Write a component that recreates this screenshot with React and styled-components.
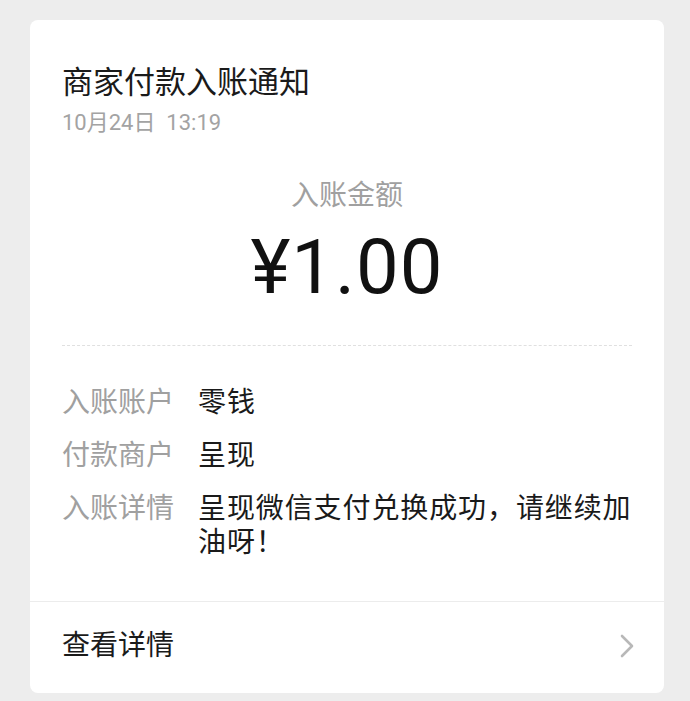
import React from 'react';
import styled, { createGlobalStyle } from 'styled-components';

const GlobalStyle = createGlobalStyle`
  html, body {
    margin: 0;
    padding: 0;
    background: #ededed;
  }
  body {
    font-family: Roboto, "Noto Sans CJK SC", sans-serif;
    -webkit-font-smoothing: antialiased;
  }
`;

const Page = styled.div`
  width: 690px;
  min-height: 701px;
  padding-top: 20px;
  box-sizing: border-box;
`;

const Card = styled.div`
  width: 634px;
  margin-left: 30px;
  background: #ffffff;
  border-radius: 8px;
  overflow: hidden;
`;

const Body = styled.div`
  padding: 43px 30px 41px 32px;
`;

const Title = styled.div`
  font-size: 31px;
  line-height: 40px;
  color: #1a1a1a;
`;

const Time = styled.div`
  margin-top: 5px;
  font-size: 22px;
  line-height: 30px;
  color: #a3a3a3;
`;

const AmountBlock = styled.div`
  display: flex;
  flex-direction: column;
  align-items: center;
  margin-top: 40px;
  margin-right: 2px;
`;

const AmountLabel = styled.div`
  font-size: 28px;
  line-height: 36px;
  color: #a0a0a0;
`;

const Amount = styled.div`
  margin-top: 15px;
  font-family: Roboto, sans-serif;
  font-size: 76px;
  line-height: 76px;
  color: #111111;
  letter-spacing: 1px;
`;

const Dashed = styled.div`
  margin-top: 40px;
  margin-right: 2px;
  border-top: 1.5px dashed #e0e0e0;
`;

const Rows = styled.div`
  margin-top: 40px;
  display: flex;
  flex-direction: column;
  gap: 19px;
`;

const Row = styled.div`
  display: flex;
  font-size: 28px;
  line-height: 34px;
`;

const Label = styled.div`
  flex: 0 0 136px;
  color: #a0a0a0;
`;

const Value = styled.div`
  flex: 1;
  letter-spacing: 0.9px;
  color: #1a1a1a;
`;

const Footer = styled.div`
  display: flex;
  align-items: center;
  justify-content: space-between;
  height: 92px;
  padding: 0 28px 4px 32px;
  box-sizing: border-box;
  border-top: 1px solid #ececec;
`;

const FooterText = styled.div`
  font-size: 28px;
  line-height: 34px;
  color: #1a1a1a;
`;

const Chevron = () => (
  <svg width="17" height="26" viewBox="0 0 17 26">
    <polyline
      points="3,3 13,13 3,23"
      fill="none"
      stroke="#b8b8b8"
      strokeWidth="2.6"
      strokeLinecap="round"
      strokeLinejoin="round"
    />
  </svg>
);

const rows = [
  { label: '入账账户', value: '零钱' },
  { label: '付款商户', value: '呈现' },
  { label: '入账详情', value: '呈现微信支付兑换成功，请继续加油呀！' },
];

export default function App() {
  return (
    <Page>
      <GlobalStyle />
      <Card>
        <Body>
          <Title>商家付款入账通知</Title>
          <Time>10月24日&nbsp;&nbsp;13:19</Time>
          <AmountBlock>
            <AmountLabel>入账金额</AmountLabel>
            <Amount>¥1.00</Amount>
          </AmountBlock>
          <Dashed />
          <Rows>
            {rows.map(r => (
              <Row key={r.label}>
                <Label>{r.label}</Label>
                <Value>{r.value}</Value>
              </Row>
            ))}
          </Rows>
        </Body>
        <Footer>
          <FooterText>查看详情</FooterText>
          <Chevron />
        </Footer>
      </Card>
    </Page>
  );
}
